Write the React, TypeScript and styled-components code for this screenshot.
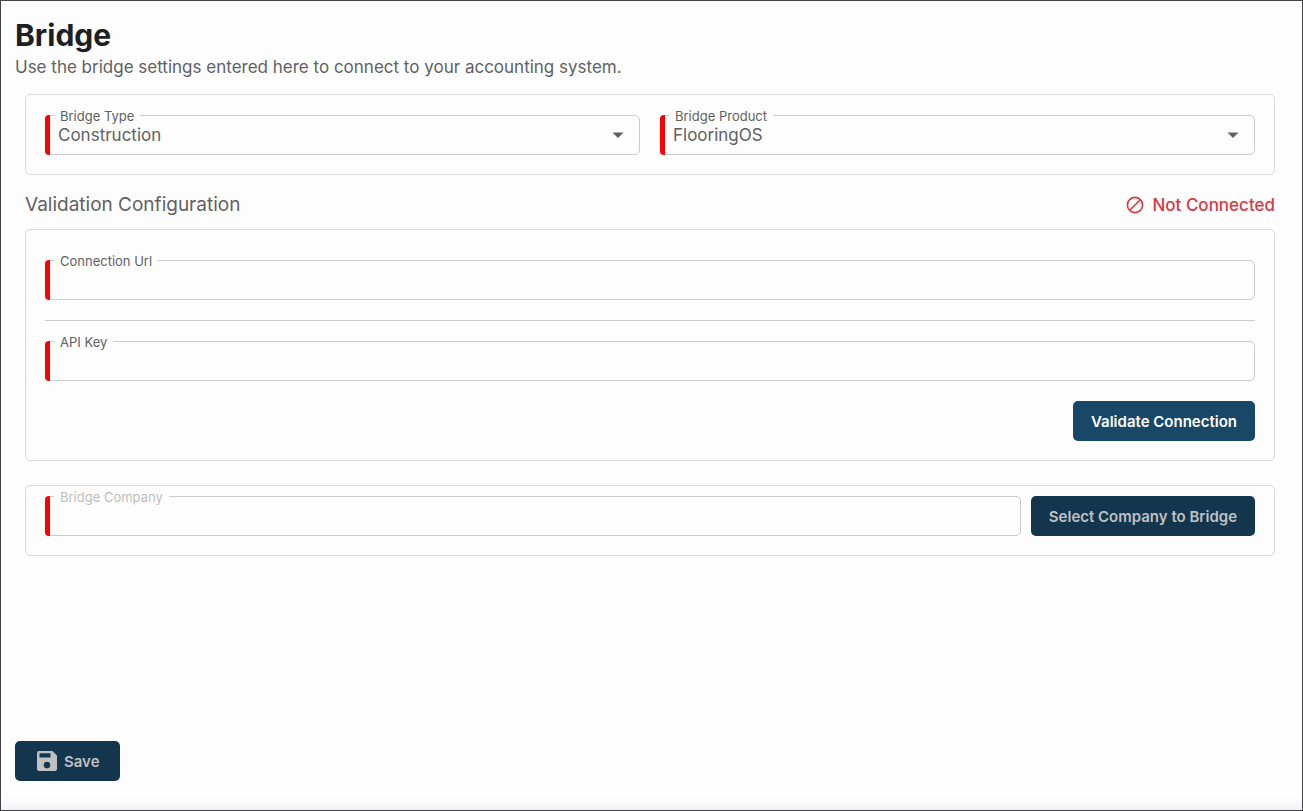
import React, { useState } from "react";
import styled, { createGlobalStyle, css } from "styled-components";

const GlobalStyle = createGlobalStyle`
  *, *::before, *::after { box-sizing: border-box; }
  body {
    margin: 0;
    background: #fdfdfd;
    color: #5f6163;
    font-family: Inter, "Liberation Sans", sans-serif;
  }
`;

const Page = styled.main`
  display: flex;
  flex-direction: column;
  min-height: 100vh;
  padding: 16px 27px 29px 14px;
  border: 1px solid #444446;
  background: linear-gradient(to top, #f3f3f3, #fdfdfd 12px);
`;

const Title = styled.h1`
  margin: 0;
  color: #1d2023;
  font-size: 30px;
  line-height: 36px;
  font-weight: 700;
`;

const Subtitle = styled.p`
  margin: 0;
  font-size: 17px;
  line-height: 28px;
`;

const Content = styled.div`
  margin: 13px 0 24px 10px;
`;

const Panel = styled.section<{ $top: number }>`
  padding: ${({ $top }) => $top}px 19px 19px;
  border: 1px solid #d9d9d9;
  border-radius: 5px;

  & + & {
    margin-top: 24px;
  }
`;

const Columns = styled.div`
  display: grid;
  grid-template-columns: 1fr 1fr;
  gap: 20px;
`;

const SectionHeader = styled.div`
  display: flex;
  align-items: center;
  justify-content: space-between;
  padding: 18px 0 12px;
`;

const SectionTitle = styled.h2`
  margin: 0;
  font-size: 19px;
  line-height: 24px;
  font-weight: 400;
`;

const Status = styled.span`
  display: flex;
  align-items: center;
  gap: 8px;
  color: #d93a3f;
  font-size: 17px;
  line-height: 24px;
  font-weight: 500;
`;

const FieldBox = styled.div`
  position: relative;
  flex: 1;
  height: 40px;
  border: 1px solid #cbcbcb;
  border-radius: 5px;

  &::before {
    content: "";
    position: absolute;
    top: -1px;
    bottom: -1px;
    left: -1px;
    width: 5px;
    border-radius: 4px 0 0 4px;
    background: #ff0000;
  }
`;

const FieldLabel = styled.label<{ $muted?: boolean }>`
  position: absolute;
  top: -8px;
  left: 8px;
  padding: 0 6px;
  background: #fdfdfd;
  color: ${({ $muted }) => ($muted ? "#bdbdbd" : "#5f6163")};
  font-size: 13px;
  line-height: 17px;
`;

const control = css`
  display: block;
  width: 100%;
  height: 38px;
  padding: 0 12px;
  border: 0;
  border-radius: 5px;
  background: transparent;
  color: inherit;
  font: inherit;
  font-size: 17px;
`;

const Input = styled.input`
  ${control}
`;

const Select = styled.select`
  ${control}
  appearance: none;
`;

const Arrow = styled.svg`
  position: absolute;
  top: 16px;
  right: 15px;
  pointer-events: none;
`;

const Divider = styled.hr`
  height: 1px;
  margin: 20px 0;
  border: 0;
  background: #cbcbcb;
`;

const Actions = styled.div`
  display: flex;
  justify-content: flex-end;
  margin-top: 20px;
`;

const CompanyRow = styled.div`
  display: flex;
  gap: 10px;
`;

const Button = styled.button<{ $wide?: boolean }>`
  display: flex;
  align-items: center;
  gap: 5px;
  height: 40px;
  padding: 0 ${({ $wide }) => ($wide ? 20 : 18)}px;
  border: 0;
  border-radius: 5px;
  background: #184767;
  color: #ffffff;
  font: inherit;
  font-size: 15px;
  font-weight: 600;
  white-space: nowrap;

  &:disabled {
    background: #13354d;
    color: #bfc1c3;
  }
`;

const Footer = styled.footer`
  display: flex;
  margin-top: auto;
`;

function SelectField({ id, label, options }: { id: string; label: string; options: string[] }) {
  const [value, setValue] = useState(options[0]);
  return (
    <FieldBox>
      <Select id={id} required value={value} onChange={(e) => setValue(e.target.value)}>
        {options.map((option) => (
          <option key={option}>{option}</option>
        ))}
      </Select>
      <FieldLabel htmlFor={id}>{label}</FieldLabel>
      <Arrow width="12" height="6" viewBox="0 0 12 6" aria-hidden="true">
        <path d="M0.5 0.5h11L6 6z" fill="#5f6163" />
      </Arrow>
    </FieldBox>
  );
}

function TextField({ id, label, disabled }: { id: string; label: string; disabled?: boolean }) {
  return (
    <FieldBox>
      <Input id={id} type="text" required disabled={disabled} />
      <FieldLabel htmlFor={id} $muted={disabled}>
        {label}
      </FieldLabel>
    </FieldBox>
  );
}

export default function App() {
  return (
    <>
      <GlobalStyle />
      <Page>
        <Title>Bridge</Title>
        <Subtitle>Use the bridge settings entered here to connect to your accounting system.</Subtitle>
        <Content>
          <Panel $top={20}>
            <Columns>
              <SelectField id="bridge-type" label="Bridge Type" options={["Construction"]} />
              <SelectField id="bridge-product" label="Bridge Product" options={["FlooringOS"]} />
            </Columns>
          </Panel>
          <SectionHeader>
            <SectionTitle>Validation Configuration</SectionTitle>
            <Status>
              <svg width="18" height="18" viewBox="0 0 18 18" fill="none" stroke="currentColor" strokeWidth="1.6" aria-hidden="true">
                <circle cx="9" cy="9" r="7.6" />
                <path d="M3.7 14.3 14.3 3.7" />
              </svg>
              Not Connected
            </Status>
          </SectionHeader>
          <Panel $top={30}>
            <TextField id="connection-url" label="Connection Url" />
            <Divider />
            <TextField id="api-key" label="API Key" />
            <Actions>
              <Button type="button">Validate Connection</Button>
            </Actions>
          </Panel>
          <Panel $top={10}>
            <CompanyRow>
              <TextField id="bridge-company" label="Bridge Company" disabled />
              <Button type="button" disabled>
                Select Company to Bridge
              </Button>
            </CompanyRow>
          </Panel>
        </Content>
        <Footer>
          <Button type="submit" $wide disabled>
            <svg width="24" height="24" viewBox="0 0 24 24" fill="currentColor" aria-hidden="true">
              <path
                fillRule="evenodd"
                d="M4 2h13.500L22 6.500V20a2 2 0 0 1-2 2H4a2 2 0 0 1-2-2V4a2 2 0 0 1 2-2zM4.500 4.200v4.300h11V4.200zM12 12.800a3.300 3.300 0 1 0 0 6.600 3.300 3.300 0 0 0 0-6.600z"
              />
            </svg>
            Save
          </Button>
        </Footer>
      </Page>
    </>
  );
}
